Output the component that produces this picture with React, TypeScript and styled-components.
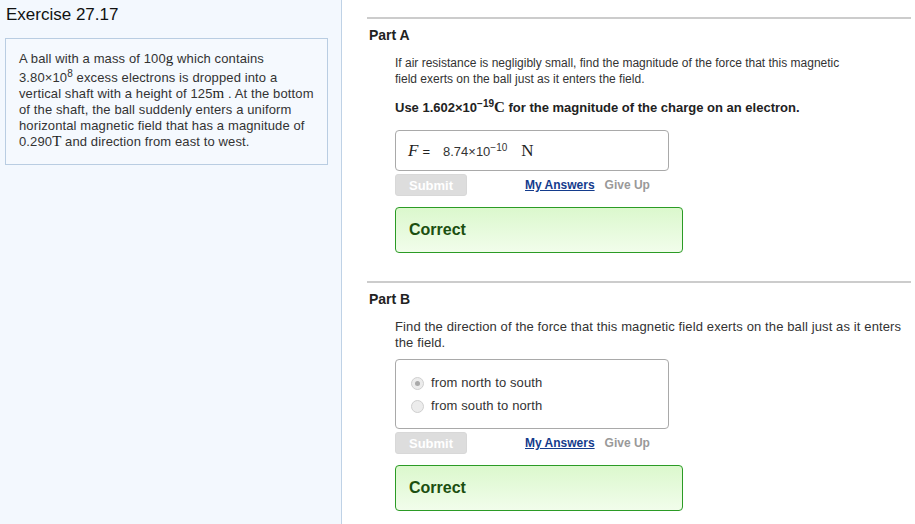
import React from "react";
import styled, { createGlobalStyle } from "styled-components";

const Global = createGlobalStyle`
  html, body { margin: 0; padding: 0; background: #ffffff; }
  body { font-family: "Liberation Sans", Arial, sans-serif; color: #333; }
`;

const Page = styled.div`
  display: flex;
  height: 524px;
  width: 915px;
  overflow: hidden;
`;

const Sidebar = styled.aside`
  width: 342px;
  flex-shrink: 0;
  background: #f3f8fe;
  border-right: 1px solid #bfd2e6;
  box-sizing: border-box;
  padding: 6px 13px 0 5px;
`;

const Title = styled.h1`
  margin: 0 0 0 1px;
  font-size: 17px;
  line-height: 18px;
  font-weight: normal;
  color: #111;
`;

const ProblemBox = styled.div`
  margin-top: 14px;
  border: 1px solid #b9cde2;
  background: #f5f9fe;
  padding: 12px 8px 14px 13px;
  font-size: 13px;
  letter-spacing: 0.12px;
  line-height: 16px;
  color: #333;
`;

const Unit = styled.span`
  font-family: "Liberation Serif", "Times New Roman", serif;
  font-size: 15px;
  line-height: 1;
  letter-spacing: 0;
  color: #222;
`;

const Sup = styled.sup`
  font-size: 10px;
  line-height: 14px;
  vertical-align: 5px;
`;

const Main = styled.main`
  flex: 1;
  padding: 17px 4px 0 25px;
  display: flex;
  flex-direction: column;
`;

const Separator = styled.div<{ $top?: number }>`
  height: 2px;
  background: #cccccc;
  margin-top: ${(p) => p.$top ?? 0}px;
`;

const PartTitle = styled.h2`
  margin: 8px 0 0 2px;
  font-size: 14px;
  line-height: 17px;
  font-weight: bold;
  color: #222;
`;

const Body = styled.div`
  padding-left: 28px;
  display: flex;
  flex-direction: column;
  align-items: flex-start;
`;

const Para = styled.p<{
  $top: number;
  $bold?: boolean;
  $width: number;
  $size?: number;
}>`
  margin: ${(p) => p.$top}px 0 0 0;
  font-size: ${(p) => p.$size ?? 13}px;
  letter-spacing: ${(p) => (p.$bold || p.$size ? "0" : "0.12px")};
  line-height: 16px;
  font-weight: ${(p) => (p.$bold ? "bold" : "normal")};
  color: ${(p) => (p.$bold ? "#222" : "#333")};
  max-width: ${(p) => p.$width}px;
`;

const AnswerBox = styled.div<{ $top: number; $height: number }>`
  margin-top: ${(p) => p.$top}px;
  width: 274px;
  height: ${(p) => p.$height}px;
  box-sizing: border-box;
  border: 1px solid #a9a9a9;
  border-radius: 4px;
  background: #fff;
`;

const FormulaRow = styled.div`
  display: flex;
  align-items: baseline;
  padding: 10px 0 0 12px;
`;

const Var = styled.span`
  font-family: "Liberation Serif", "Times New Roman", serif;
  font-style: italic;
  font-size: 17px;
  color: #222;
`;

const Eq = styled.span`
  font-size: 13px;
  margin-left: 4px;
  color: #222;
`;

const Value = styled.span`
  font-size: 13px;
  margin-left: 13px;
  color: #333;
`;

const UnitN = styled.span`
  font-family: "Liberation Serif", "Times New Roman", serif;
  font-size: 17px;
  margin-left: 14px;
  color: #222;
`;

const ActionRow = styled.div`
  margin-top: 3px;
  display: flex;
  align-items: center;
  height: 22px;
`;

const SubmitButton = styled.button`
  width: 72px;
  height: 22px;
  border: 1px solid #d8d8d8;
  border-radius: 3px;
  background: #dddddd;
  color: #fff;
  font-family: "Liberation Sans", Arial, sans-serif;
  font-weight: bold;
  font-size: 13px;
  padding: 0;
`;

const LinkText = styled.a<{ $muted?: boolean }>`
  font-size: 12px;
  font-weight: bold;
  color: ${(p) => (p.$muted ? "#999" : "#143b8c")};
  text-decoration: ${(p) => (p.$muted ? "none" : "underline")};
  margin-left: ${(p) => (p.$muted ? 10 : 58)}px;
`;

const CorrectBox = styled.div`
  margin-top: 11px;
  width: 288px;
  height: 46px;
  box-sizing: border-box;
  border: 1px solid #2b9b25;
  border-radius: 4px;
  background: linear-gradient(#dbf8cd, #f1fdeb);
  display: flex;
  align-items: center;
  padding-left: 13px;
  font-weight: bold;
  font-size: 16px;
  color: #1b4f10;
`;

const OptionList = styled.div`
  display: flex;
  flex-direction: column;
  gap: 7px;
  padding: 15px 0 0 15px;
`;

const Option = styled.label`
  display: flex;
  align-items: center;
  font-size: 13px;
  letter-spacing: 0.12px;
  line-height: 16px;
  color: #333;
`;

const Radio = styled.span<{ $checked?: boolean }>`
  width: 11px;
  height: 11px;
  border-radius: 50%;
  border: 1px solid #cfcfcf;
  background: #ececec;
  margin-right: 7px;
  display: flex;
  align-items: center;
  justify-content: center;
  &::after {
    content: "";
    width: 5px;
    height: 5px;
    border-radius: 50%;
    background: ${(p) => (p.$checked ? "#a9a9a9" : "transparent")};
  }
`;

function Actions() {
  return (
    <ActionRow>
      <SubmitButton disabled>Submit</SubmitButton>
      <LinkText href="#">My Answers</LinkText>
      <LinkText $muted>Give Up</LinkText>
    </ActionRow>
  );
}

export default function App() {
  return (
    <>
      <Global />
      <Page>
        <Sidebar>
          <Title>Exercise 27.17</Title>
          <ProblemBox>
            A ball with a mass of 100<Unit>g</Unit> which contains
            <br />
            3.80×10<Sup>8</Sup> excess electrons is dropped into a vertical
            shaft with a height of 125<Unit>m</Unit> . At the bottom of the
            shaft, the ball suddenly enters a uniform horizontal magnetic field
            that has a magnitude of 0.290<Unit>T</Unit> and direction from east
            to west.
          </ProblemBox>
        </Sidebar>
        <Main>
          <Separator />
          <PartTitle>Part A</PartTitle>
          <Body>
            <Para $top={11} $width={450} $size={12}>
              If air resistance is negligibly small, find the magnitude of the
              force that this magnetic field exerts on the ball just as it
              enters the field.
            </Para>
            <Para $top={10} $bold $width={470}>
              Use 1.602×10<Sup>−19</Sup>
              <Unit>C</Unit> for the magnitude of the charge on an electron.
            </Para>
            <AnswerBox $top={14} $height={41}>
              <FormulaRow>
                <Var>F</Var>
                <Eq>=</Eq>
                <Value>
                  8.74×10<Sup>−10</Sup>
                </Value>
                <UnitN>N</UnitN>
              </FormulaRow>
            </AnswerBox>
            <Actions />
            <CorrectBox>Correct</CorrectBox>
          </Body>
          <Separator $top={28} />
          <PartTitle>Part B</PartTitle>
          <Body>
            <Para $top={11} $width={512}>
              Find the direction of the force that this magnetic field exerts
              on the ball just as it enters the field.
            </Para>
            <AnswerBox $top={8} $height={70}>
              <OptionList>
                <Option>
                  <Radio $checked />
                  from north to south
                </Option>
                <Option>
                  <Radio />
                  from south to north
                </Option>
              </OptionList>
            </AnswerBox>
            <Actions />
            <CorrectBox>Correct</CorrectBox>
          </Body>
        </Main>
      </Page>
    </>
  );
}
